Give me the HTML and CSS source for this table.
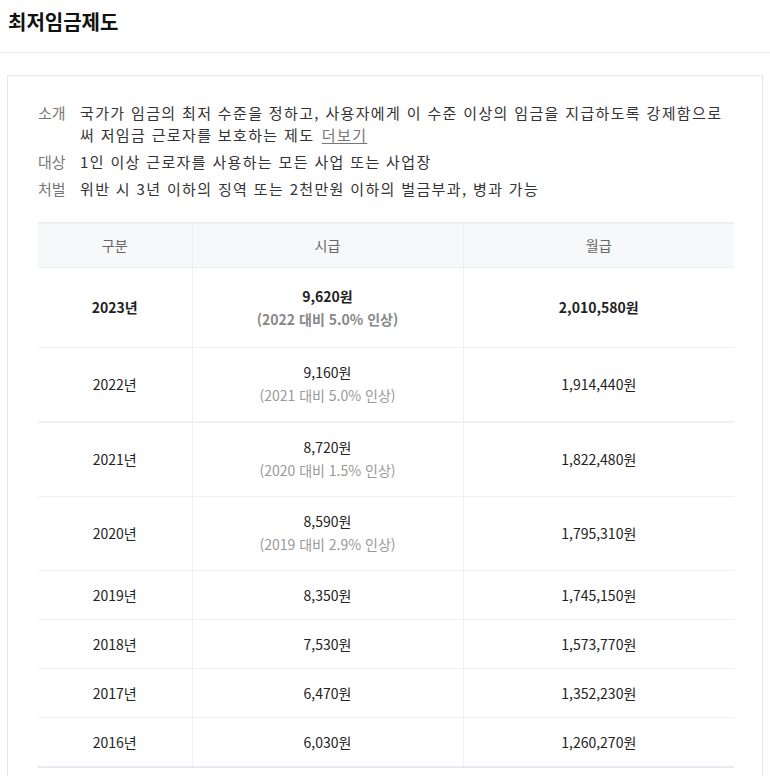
FILE: index.html
```html
<!DOCTYPE html>
<html lang="ko">
<head>
  <meta charset="UTF-8">
  <meta name="viewport" content="width=device-width, initial-scale=1.0">
  <title>최저임금제도</title>
  <link rel="stylesheet" href="styles.css">
</head>
<body>
  <header class="page-header">
    <h1>최저임금제도</h1>
  </header>

  <main class="content">
    <section class="card">
      <dl class="summary">
        <div class="summary-row">
          <dt>소개</dt>
          <dd>국가가 임금의 최저 수준을 정하고, 사용자에게 이 수준 이상의 임금을 지급하도록 강제함으로써 저임금 근로자를 보호하는 제도 <a href="#" class="more">더보기</a></dd>
        </div>
        <div class="summary-row">
          <dt>대상</dt>
          <dd>1인 이상 근로자를 사용하는 모든 사업 또는 사업장</dd>
        </div>
        <div class="summary-row">
          <dt>처벌</dt>
          <dd>위반 시 3년 이하의 징역 또는 2천만원 이하의 벌금부과, 병과 가능</dd>
        </div>
      </dl>

      <table class="wage-table">
        <colgroup>
          <col class="col-year">
          <col class="col-hour">
          <col class="col-month">
        </colgroup>
        <thead>
          <tr>
            <th>구분</th>
            <th>시급</th>
            <th>월급</th>
          </tr>
        </thead>
        <tbody>
          <tr class="current">
            <td>2023년</td>
            <td>9,620원<span class="rate">(2022 대비 5.0% 인상)</span></td>
            <td>2,010,580원</td>
          </tr>
          <tr class="group-end">
            <td>2022년</td>
            <td>9,160원<span class="rate">(2021 대비 5.0% 인상)</span></td>
            <td>1,914,440원</td>
          </tr>
          <tr>
            <td>2021년</td>
            <td>8,720원<span class="rate">(2020 대비 1.5% 인상)</span></td>
            <td>1,822,480원</td>
          </tr>
          <tr>
            <td>2020년</td>
            <td>8,590원<span class="rate">(2019 대비 2.9% 인상)</span></td>
            <td>1,795,310원</td>
          </tr>
          <tr>
            <td>2019년</td>
            <td>8,350원</td>
            <td>1,745,150원</td>
          </tr>
          <tr>
            <td>2018년</td>
            <td>7,530원</td>
            <td>1,573,770원</td>
          </tr>
          <tr>
            <td>2017년</td>
            <td>6,470원</td>
            <td>1,352,230원</td>
          </tr>
          <tr>
            <td>2016년</td>
            <td>6,030원</td>
            <td>1,260,270원</td>
          </tr>
        </tbody>
      </table>
    </section>
  </main>
</body>
</html>
```

FILE: styles.css
```css
/* Basic Reset */
* {
  box-sizing: border-box;
  margin: 0;
  padding: 0;
}
body {
  font-family: "Noto Sans CJK KR", "Noto Sans", sans-serif;
  color: #222;
  background-color: #fff;
}
/* Page Header */
.page-header {
  height: 53px;
  padding: 8px 8px 0;
  border-bottom: 1px solid #ebedf0;
}
.page-header h1 {
  font-size: 20px;
  font-weight: bold;
  line-height: 28px;
  color: #111;
}
/* Card */
.content {
  padding: 22px 7px 0;
}
.card {
  border: 1px solid #e4e6ea;
  border-bottom: none;
  padding: 26px 28px 10px 30px;
}
/* Summary List */
.summary {
  font-size: 15px;
  line-height: 22px;
  letter-spacing: 1.35px;
  margin-bottom: 22px;
}
.summary-row {
  display: flex;
  margin-bottom: 5px;
}
.summary-row dt {
  flex: 0 0 42px;
  color: #777;
  letter-spacing: 0;
}
.summary-row dd {
  flex: 1;
  color: #333;
}
.more {
  margin-left: 2px;
  color: #777;
  text-decoration: underline;
  text-underline-offset: 2px;
}
/* Wage Table */
.wage-table {
  width: 100%;
  border-collapse: collapse;
  font-size: 14px;
  text-align: center;
  border-top: 2px solid #eceef2;
  border-bottom: 2px solid #e6e9ee;
}
.col-year {
  width: 154px;
}
.col-hour {
  width: 271px;
}
.wage-table th {
  height: 44px;
  font-weight: normal;
  color: #666;
  background-color: #f7f8fa;
}
.wage-table th,
.wage-table td {
  border-left: 1px solid #eef0f3;
}
.wage-table th:first-child,
.wage-table td:first-child {
  border-left: none;
}
.wage-table td {
  padding: 14px 0;
  line-height: 20px;
  color: #222;
  border-top: 1px solid #eef0f3;
}
.rate {
  display: block;
  margin-top: 2px;
  line-height: 23px;
  color: #999;
}
.wage-table .current td {
  padding: 17px 0;
  font-weight: bold;
  line-height: 22px;
}
.current .rate {
  margin-top: 1px;
  line-height: 22px;
  color: #888;
}
.wage-table .group-end td {
  border-bottom: 2px solid #eef0f3;
}
```
